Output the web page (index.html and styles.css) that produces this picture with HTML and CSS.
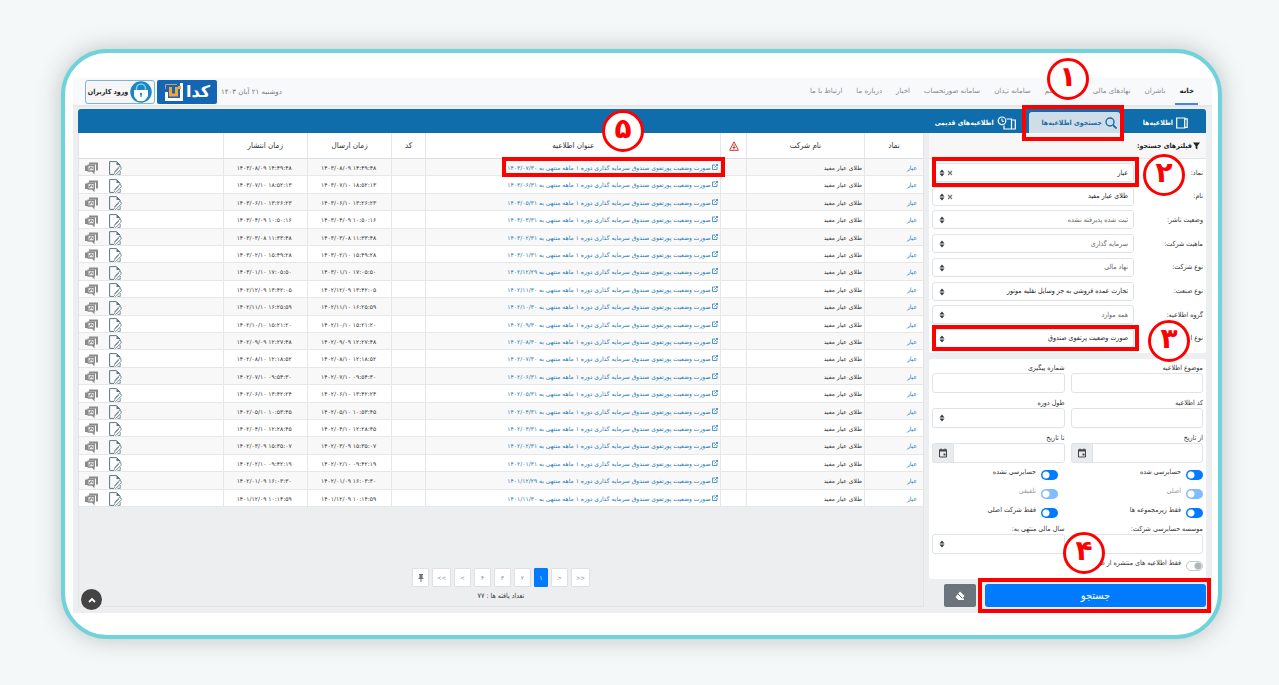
FILE: index.html
```
<!DOCTYPE html>
<html lang="fa" dir="rtl">
<head>
<meta charset="utf-8">
<title>کدال - جستجوی اطلاعیه‌ها</title>
<link rel="stylesheet" href="styles.css">
</head>
<body>
<svg class="defs" aria-hidden="true">
  <symbol id="i-sort" viewBox="0 0 6 8"><path d="M3 0.500 5.500 3.500H.5ZM3 7.500 .5 4.500h5Z" fill="#343a40"/></symbol>
  <symbol id="i-x" viewBox="0 0 6 6"><path d="M1 1 5 5M5 1 1 5" stroke="#777" stroke-width="1.200" fill="none"/></symbol>
  <symbol id="i-ext" viewBox="0 0 12 12"><path d="M6 2H1v9h9V6M7.500 1H11v3.500M11 1 5 7" fill="none" stroke="#1d78b5" stroke-width="1.500"/></symbol>
  <symbol id="i-note" viewBox="0 0 13 14"><path d="M5 13.400H.6V.6H7.500L11 4v2" fill="none" stroke="#5d7782" stroke-width="1"/><path d="M7.500.6V4H11Z" fill="#5d7782"/><path d="M5.500 10.800 9.600 6.200a1.500 1.500 0 0 1 2.300 2L7.300 13a1 1 0 0 1-1.600-1.400l4.200-4.500M11.200 10v3.400H8.500" fill="none" stroke="#70868f" stroke-width=".9"/></symbol>
  <symbol id="i-chat" viewBox="0 0 13 13"><path d="M4 .5h9v8h-2V2.500H4Z" fill="#8b8b8b"/><path d="M0 3.500h2.500V2.500H10v7h-.5v3L7 9.800H2.500V9H0Z" fill="#8b8b8b"/><path d="M3.500 4h5v4.300h-5Z" fill="#e6e6e6"/><path d="M4.300 7.800V6.500h1.200V5h1.500v1.500h1" stroke="#8b8b8b" stroke-width=".9" fill="none"/></symbol>
  <symbol id="i-cal" viewBox="0 0 10 10"><path d="M1.500 2h7v7h-7Z" fill="none" stroke="#444" stroke-width="1"/><path d="M1 1.500h8v2H1ZM2.500.5h1v2h-1ZM6.500.5h1v2h-1ZM5.500 5.500H7.500V7.500H5.500Z" fill="#444"/></symbol>
  <symbol id="i-book" viewBox="0 0 12 12"><path d="M.7 1h8v10h-8ZM8.700 1.800h2.500v8.600H8.700" fill="none" stroke="#fff" stroke-width="1.200"/></symbol>
</svg>

<div class="frame">
  <div class="app">
    <header class="topbar">
      <nav class="menu">
        <a class="current" href="#">خانه</a>
        <a href="#">ناشران</a>
        <a href="#">نهادهای مالی</a>
        <a class="short" href="#">ستم</a>
        <a href="#">سامانه تـِدان</a>
        <a href="#">سامانه صورتحساب</a>
        <a href="#">اخبار</a>
        <a href="#">درباره ما</a>
        <a href="#">ارتباط با ما</a>
      </nav>
      <div class="account">
        <span class="today">دوشنبه ۲۱ آبان ۱۴۰۳</span>
        <span class="logo">
          <svg viewBox="0 0 60 24" width="60" height="24" role="img" aria-label="کدال">
            <text class="logo-text" x="53" y="17">کدا</text>
            <path d="M24.500 3v16.500H9.500V12" fill="none" stroke="#fff" stroke-width="3"/>
            <path d="M8.500 9V4.500H20" stroke="#c9a066" fill="none"/>
            <path d="M13.500 7v8h6V7M21 7.500h3" fill="none" stroke="#f6a13c" stroke-width="3"/>
          </svg>
        </span>
        <button class="login" type="button">
          <svg viewBox="0 0 22 22" width="22" height="22"><circle cx="11" cy="11" r="10" fill="#fff" stroke="#1b86c2" stroke-width="1.500"/><path d="M1 11a10 10 0 0 1 20 0q-1 6-4 8H5q-3-2-4-8Z" fill="#1b86c2"/><path d="M6.500 9V7.500a4.500 4.500 0 0 1 9 0V9" fill="none" stroke="#7fd0ef" stroke-width="1.500"/><path d="M4 9h14v5a7 6 0 0 1-14 0Z" fill="#fff"/><circle cx="11" cy="13" r="1.200" fill="#1b86c2"/><path d="M10.400 13h1.200v3h-1.200Z" fill="#1b86c2"/></svg>
          ورود کاربران
        </button>
      </div>
    </header>

    <div class="content">
      <nav class="tabs">
        <a class="tab" href="#"><svg width="12" height="12"><use href="#i-book"/></svg>اطلاعیه‌ها</a>
        <a class="tab active" href="#">
          <svg width="12" height="12" viewBox="0 0 12 12"><circle cx="5" cy="5" r="4" fill="none" stroke="#1a6ba6" stroke-width="1.400"/><path d="m8 8 3.500 3.500" stroke="#1a6ba6" stroke-width="1.800"/></svg>جستجوی اطلاعیه‌ها
          <span class="mark mark-tab"></span>
          <span class="step step-1">۱</span>
        </a>
        <a class="tab old" href="#"><svg width="20" height="14" viewBox="0 0 20 14"><path d="M9.500 3h5v10H7V9.500M14.700 4h3.600v9h-3.600" fill="none" stroke="#fff" stroke-width="1.200"/><circle cx="5" cy="4.800" r="3.800" fill="none" stroke="#fff" stroke-width="1.200"/><path d="M5 2.500v2.800h2" fill="none" stroke="#fff"/></svg>اطلاعیه‌های قدیمی</a>
      </nav>

      <div class="columns">
        <form class="side">
          <section class="panel">
            <h2 class="panel-head"><svg width="7" height="8" viewBox="0 0 8 8"><path d="M0 0h8L5 4v4L3 6.500V4Z" fill="#222"/></svg>فیلترهای جستجو:</h2>
            <div class="filters" id="filters"></div>
          </section>

          <section class="panel details">
            <div class="pair">
              <label class="field">موضوع اطلاعیه<input type="text"></label>
              <label class="field">شماره پیگیری<input type="text"></label>
              <label class="field">کد اطلاعیه<input type="text"></label>
              <label class="field">طول دوره<span class="pick"><select><option></option></select><svg class="sort"><use href="#i-sort"/></svg></span></label>
              <div class="field"><label for="from">از تاریخ</label><span class="date"><input id="from" type="text"><button type="button" aria-label="تقویم"><svg width="10" height="10"><use href="#i-cal"/></svg></button></span></div>
              <div class="field"><label for="to">تا تاریخ</label><span class="date"><input id="to" type="text"><button type="button" aria-label="تقویم"><svg width="10" height="10"><use href="#i-cal"/></svg></button></span></div>
            </div>
            <div class="switches">
              <label class="switch"><input type="checkbox" checked><span>حسابرسی شده</span></label>
              <label class="switch"><input type="checkbox" checked><span>حسابرسی نشده</span></label>
              <label class="switch"><input type="checkbox" checked disabled><span>اصلی</span></label>
              <label class="switch"><input type="checkbox" checked disabled><span>تلفیقی</span></label>
              <label class="switch"><input type="checkbox" checked><span>فقط زیرمجموعه ها</span></label>
              <label class="switch"><input type="checkbox" checked><span>فقط شرکت اصلی</span></label>
            </div>
            <div class="pair">
              <label class="field">موسسه حسابرسی شرکت:<input type="text"></label>
              <label class="field">سال مالی منتهی به:<span class="pick"><select><option></option></select><svg class="sort"><use href="#i-sort"/></svg></span></label>
            </div>
            <label class="switch only"><input type="checkbox"><span>فقط اطلاعیه های منتشره از ط</span></label>
          </section>

          <div class="actions">
            <div class="submit-box">
              <button class="submit" type="button">جستجو</button>
              <span class="mark mark-submit"></span>
              <span class="step step-4">۴</span>
            </div>
            <button class="clear" type="reset" aria-label="پاک کردن"><svg width="10" height="10" viewBox="0 0 10 10"><path d="M5 .5 9.500 5 7 7.500H9V9H3.500L.5 6Z" fill="#fff"/><path d="m3 3 4 4" stroke="#6c757d"/></svg></button>
          </div>
        </form>

        <main class="results">
          <table>
            <colgroup><col class="c-sym"><col class="c-name"><col class="c-warn"><col class="c-title"><col class="c-code"><col class="c-time"><col class="c-time"><col class="c-act"></colgroup>
            <thead><tr>
              <th>نماد</th><th>نام شرکت</th>
              <th><svg width="10" height="10" viewBox="0 0 10 10"><path d="M5 .8 9.400 9.300H.6Z" fill="none" stroke="#d9343f"/><path d="M5 3.500v5M3.500 6.500h3" stroke="#a33" stroke-width=".9"/></svg></th>
              <th>عنوان اطلاعیه</th><th>کد</th><th>زمان ارسال</th><th>زمان انتشار</th><th></th>
            </tr></thead>
            <tbody id="rows"></tbody>
          </table>
          <span class="step step-5">۵</span>
          <footer class="foot">
            <nav class="pages">
              <button type="button" aria-label="سنجاق"><svg width="6" height="8" viewBox="0 0 6 8"><path d="M1 0h4v1H4.500v2.500L6 5H3.500v3h-1V5H0l1.500-1.500V1H1Z" fill="#6c757d"/></svg></button><button type="button" class="wide">&lt;&lt;</button><button type="button">&lt;</button><button type="button">۴</button><button type="button">۳</button><button type="button">۲</button><button type="button" class="on">۱</button><button type="button">&gt;</button><button type="button" class="wide">&gt;&gt;</button>
            </nav>
            <p class="total">تعداد یافته ها : ۷۷</p>
          </footer>
        </main>
      </div>
      <button class="to-top" type="button" aria-label="بالا"><svg width="8" height="6" viewBox="0 0 8 6"><path d="m1 5 3-3 3 3" fill="none" stroke="#fff" stroke-width="1.800"/></svg></button>
    </div>
  </div>
</div>
<script src="app.js"></script>
</body>
</html>
```
FILE: app.js
```
const filters = [
  ["نماد:", "عیار", "removable dark", '<span class="mark mark-field"></span><span class="step step-2">۲</span>'],
  ["نام:", "طلای عیار مفید", "removable dark", ""],
  ["وضعیت ناشر:", "ثبت شده پذیرفته نشده", "", ""],
  ["ماهیت شرکت:", "سرمایه گذاری", "", ""],
  ["نوع شرکت:", "نهاد مالی", "", ""],
  ["نوع صنعت:", "تجارت عمده فروشی به جز وسایل نقلیه موتور", "dark", ""],
  ["گروه اطلاعیه:", "همه موارد", "", ""],
  ["نوع ا", "صورت وضعیت پرتفوی صندوق", "dark", '<span class="mark mark-last"></span><span class="step step-3">۳</span>']
];
document.getElementById("filters").innerHTML = filters.map(([label, value, kind, extra], i) => `
  <div class="filter">
    <label for="f${i}">${label}</label>
    <span class="pick ${kind}"><select id="f${i}"><option>${value}</option></select>
      ${kind.includes("removable") ? '<svg class="x"><use href="#i-x"/></svg>' : ""}<svg class="sort"><use href="#i-sort"/></svg>${extra}</span>
  </div>`).join("");

const notices = [
  ["1403/07/30", "1403/08/09 14:49:48"],
  ["1403/06/31", "1403/07/10 18:52:13"],
  ["1403/05/31", "1403/06/10 13:26:23"],
  ["1403/03/31", "1403/04/09 10:50:16"],
  ["1403/02/31", "1403/03/08 11:33:48"],
  ["1403/01/31", "1403/02/10 15:49:28"],
  ["1402/12/29", "1403/01/10 17:05:50"],
  ["1402/11/30", "1402/12/09 13:42:05"],
  ["1402/10/30", "1402/11/10 16:25:59"],
  ["1402/09/30", "1402/10/10 15:21:20"],
  ["1402/08/30", "1402/09/09 12:27:48"],
  ["1402/07/30", "1402/08/10 12:18:52"],
  ["1402/06/31", "1402/07/10 09:54:30"],
  ["1402/05/31", "1402/06/10 13:42:24"],
  ["1402/04/31", "1402/05/10 10:53:45"],
  ["1402/03/31", "1402/04/10 12:28:45"],
  ["1402/02/31", "1402/03/09 15:35:07"],
  ["1402/01/31", "1402/02/10 09:42:19"],
  ["1401/12/29", "1402/01/09 16:03:30"],
  ["1401/11/30", "1401/12/09 10:14:59"]
];
const fa = s => s.replace(/\d/g, d => "۰۱۲۳۴۵۶۷۸۹"[d]);
document.getElementById("rows").innerHTML = notices.map(([end, time], i) => `
  <tr>
    <td class="sym"><a href="#">عیار</a></td>
    <td>طلای عیار مفید</td>
    <td></td>
    <td class="title"><a href="#"><svg width="6" height="6"><use href="#i-ext"/></svg> صورت وضعیت پورتفوی صندوق سرمایه گذاری دوره ۱ ماهه منتهی به ${fa(end)}</a>${i ? "" : '<span class="mark mark-row"></span>'}</td>
    <td></td>
    <td class="time" dir="ltr">${fa(time)}</td>
    <td class="time" dir="ltr">${fa(time)}</td>
    <td><span class="tools"><svg width="13" height="14"><use href="#i-note"/></svg><svg width="13" height="13"><use href="#i-chat"/></svg></span></td>
  </tr>`).join("");
```
FILE: styles.css
```
* { box-sizing: border-box; }
body {
  margin: 0;
  padding: 49px 57px 45px 61px;
  min-height: 100vh;
  background: #f4f8f8;
  font: 7px/10px "DejaVu Sans Condensed", "DejaVu Sans", sans-serif;
  color: #333;
}
button, input, select { font: inherit; color: inherit; margin: 0; padding: 0; }
a { color: inherit; text-decoration: none; }
.defs { display: none; }
svg { flex: none; }

.frame {
  border: 4px solid #70d3d9;
  border-radius: 46px;
  background: #fff;
  padding: 25px 6px 22px 8px;
  box-shadow: 0 0 24px rgba(60, 70, 70, .3);
}
.app { background: #edeef0; }

.topbar {
  display: flex;
  justify-content: space-between;
  height: 29px;
  padding: 0 14px 0 12px;
  background: #f8f9fb;
  border-bottom: 2px solid #e6e7e9;
  font-family: "DejaVu Sans", sans-serif;
}
.menu { display: flex; gap: 6px; color: #85888b; }
.menu a { padding: 8px 4px 0; white-space: nowrap; }
.menu .current { font-weight: bold; color: #222; border-bottom: 2px solid #4386f0; }
.menu .short { min-width: 42px; text-align: left; }
.account { display: flex; align-items: center; gap: 2px; }
.today { color: #777; padding-left: 2px; }
.logo { height: 24px; border-radius: 2px; background: #1565b5; }
.logo-text { font: bold 16px "DejaVu Sans", sans-serif; fill: #fff; }
.login {
  display: flex; align-items: center; justify-content: center; gap: 2px;
  width: 70px; height: 24px;
  border: 1px solid #7db5d8; border-radius: 3px;
  background: #f6f6f6; color: #222; white-space: nowrap;
  font-weight: bold; font-family: "DejaVu Sans Condensed", sans-serif;
}

.content { position: relative; padding: 2px 6px 6px 5px; }
.tabs {
  display: flex; height: 24px; padding-right: 18px;
  background: #0f6dab; border-radius: 3px 3px 0 0;
  color: #fff; font-weight: bold;
}
.tab { position: relative; display: flex; align-items: center; gap: 3px; padding-top: 4px; white-space: nowrap; }
.tab.active { min-width: 91px; margin: 3px 23px 0 0; padding: 0 3px 0 0; border-radius: 3px 3px 0 0; background: #cfdde8; color: #1a6ba6; }
.tab.old { margin-right: 12px; }

.columns { display: flex; gap: 5px; }
.side { width: 277px; flex: none; }
.panel { background: #fff; border-radius: 0 0 3px 3px; }
.panel-head {
  display: flex; align-items: center; gap: 1px; margin: 0; padding: 0 6px;
  height: 26px; background: #f7f7f8; border-bottom: 1px solid #e2e3e5;
  font-size: 7px; color: #222;
}
.filters { display: flex; flex-direction: column; justify-content: space-between; height: 194px; padding: 4px 3px 5px; }
.filter { display: flex; justify-content: space-between; align-items: center; }
.filter .pick { width: 202px; }
.pick { position: relative; display: block; color: #666; }
.pick.dark { color: #222; }
.pick select, .field input {
  display: block; width: 100%; height: 20px;
  border: 1px solid #dfe2e6; border-radius: 3px; background: #fff;
  appearance: none; outline: 0; padding: 0 5px;
}
.filter .pick select { height: 19px; }
.sort { position: absolute; left: 7px; top: 6px; width: 6px; height: 8px; pointer-events: none; }
.x { position: absolute; left: 15px; top: 7px; width: 6px; height: 6px; }

.details { margin-top: 6px; padding: 4px 3px 6px; border-radius: 3px; }
.pair { display: grid; grid-template-columns: 1fr 1fr; gap: 5px 6px; }
.field { display: block; min-width: 0; }
.field label { display: block; }
.date { display: flex; }
.date input { border-radius: 0 3px 3px 0; }
.date button { flex: none; width: 21px; height: 20px; border: 1px solid #dfe2e6; border-right: 0; border-radius: 3px 0 0 3px; background: #e9ecef; }
.date svg { display: block; margin: auto; }
.switches { display: grid; grid-template-columns: 145px 1fr; row-gap: 4px; padding: 4px 0; }
.switch { display: flex; align-items: center; gap: 5px; }
.switch span { padding-bottom: 5px; white-space: nowrap; }
.switch input {
  appearance: none; width: 17px; height: 10px; border-radius: 5px;
  background: radial-gradient(circle at 5px 5px, #fff 3px, #007bff 4px);
}
.switch input:disabled { opacity: .5; }
.switch input:disabled + span { color: #999; }
.switch input:not(:checked) { border: 1px solid #c3c8cd; background: radial-gradient(circle at 11px 4px, #adb5bd 3px, #fff 4px); }
.only { margin-top: 4px; }

.actions { display: flex; gap: 9px; padding-top: 5px; }
.submit-box { position: relative; width: 221px; }
.submit { width: 100%; height: 23px; border: 0; border-radius: 3px; background: #007bff; color: #fff; font-size: 11px; }
.clear { display: grid; place-items: center; width: 32px; height: 23px; border: 0; border-radius: 2px; background: #6c757d; }

.results { position: relative; flex: 1; display: flex; flex-direction: column; min-width: 0; border: 1px solid #e3e4e6; border-top: 0; }
table { width: 100%; table-layout: fixed; border-collapse: separate; border-spacing: 0; background: #fff; font: 6px/9px "DejaVu Sans", sans-serif; }
.c-sym { width: 7%; } .c-name { width: 14%; } .c-warn { width: 3%; } .c-title { width: 35%; }
.c-code { width: 4%; } .c-time { width: 10%; } .c-act { width: 17%; }
th { height: 26px; padding: 0; font: 8px/10px "DejaVu Sans Condensed", sans-serif; border-left: 1px solid #e6e7e9; border-bottom: 1px solid #dcdddf; }
th svg { display: block; margin: auto; }
td { height: 17px; padding: 0 2px; border-left: 1px solid #e6e7e9; border-bottom: 1px solid #e6e7e9; white-space: nowrap; }
th:last-child, td:last-child { border-left: 0; }
tr:nth-child(5n+2) td, tr:nth-child(5n+4) td { height: 18px; }
tbody tr:nth-child(odd) { background: #f8f8f8; }
td a { color: #1d78b5; }
td.sym { padding-right: 6px; }
td.title { position: relative; }
td.time { text-align: center; }
.tools { display: flex; justify-content: flex-end; align-items: flex-end; gap: 11px; height: 16px; padding-left: 4px; }

.foot { margin-top: auto; padding-bottom: 5px; }
.pages { display: flex; direction: ltr; justify-content: center; gap: 3px; }
.pages button { display: grid; place-items: center; width: 17px; height: 19px; border: 1px solid #dee0e3; border-radius: 1px; background: #fff; color: #7b8288; font-size: 6px; }
.pages .wide { width: 19px; }
.pages .on { width: 14px; background: #007bff; border-color: #007bff; color: #fff; }
.total { margin: 4px 0 0; text-align: center; }
.to-top { position: absolute; left: 8px; bottom: 3px; display: grid; place-items: center; width: 21px; height: 21px; border: 0; border-radius: 50%; background: #444; }

/* Tutorial callouts */
.mark { position: absolute; border: 4px solid #f00; pointer-events: none; }
.mark-tab { inset: -7px -4px -8px -7px; }
.mark-field { inset: -6px -5px -5px 0; }
.mark-last { inset: -4px -5px -3px 0; }
.mark-row { inset: -2px -5px -2px 76px; }
.mark-submit { inset: -6px -5px -6px -7px; }
.step {
  position: absolute; z-index: 2;
  display: grid; place-items: center;
  width: 42px; height: 42px; padding-bottom: 4px;
  border: 3px solid #f00; border-radius: 50%; background: #fff;
  color: #f00; font: bold 28px/28px "DejaVu Sans", sans-serif;
}
.step-1 { left: 18px; top: -54px; }
.step-2 { right: -51px; top: -9px; }
.step-3 { right: -56px; top: -9px; }
.step-4 { left: 78px; top: -52px; }
.step-5 { left: 523px; top: -23px; }
```
